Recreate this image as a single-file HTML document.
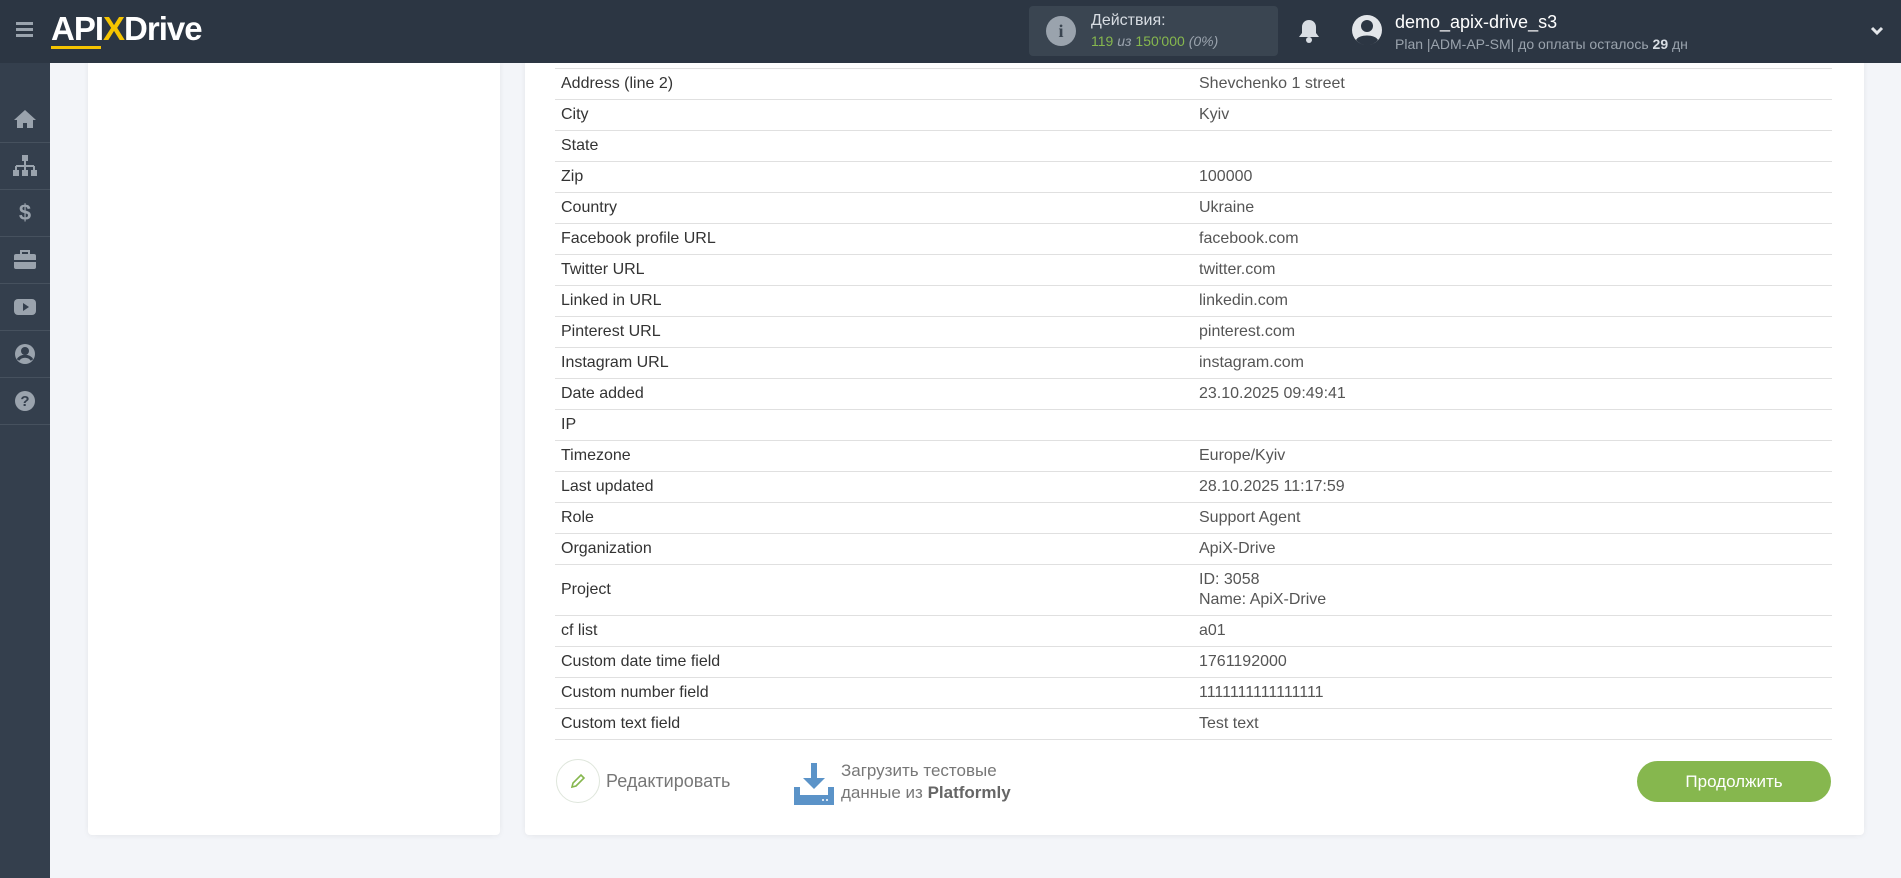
<!DOCTYPE html>
<html><head><meta charset="utf-8"><style>
*{box-sizing:border-box;margin:0;padding:0}
body{width:1901px;height:878px;overflow:hidden;background:#f3f5f9;font-family:"Liberation Sans","Noto Sans CJK SC",sans-serif;position:relative}
.hdr{position:absolute;left:0;top:0;width:1901px;height:63px;background:#2c3643;z-index:2}
.side{position:absolute;left:0;top:63px;width:50px;height:815px;background:#343f4d}
.side .it{position:absolute;left:0;width:50px;height:47px;border-bottom:1px solid #46515e;display:flex;align-items:center;justify-content:center}
.card{position:absolute;background:#fff;border-radius:4px;box-shadow:0 1px 6px rgba(0,0,0,.06)}
table{position:absolute;left:555px;top:68px;width:1277px;border-collapse:collapse;font-size:16px;color:#333}
td{border-top:1px solid #e0e0e0;height:31px;padding:0 6px;vertical-align:middle}
tr:last-child td{border-bottom:1px solid #e0e0e0}
td.v{padding-left:0;color:#555;width:633px}
</style></head><body>
<div class="hdr">
 <div style="position:absolute;left:16px;top:22px;width:17px;height:3px;background:#9aa3ad;box-shadow:0 6px 0 #9aa3ad,0 12px 0 #9aa3ad"></div>
 <div style="position:absolute;left:51px;top:10px;font-size:33px;font-weight:bold;color:#fff;letter-spacing:-1px">API<span style="color:#f5c400">X</span>Drive</div>
 <div style="position:absolute;left:51px;top:46px;width:50px;height:3px;background:#f5c400"></div>
 <div style="position:absolute;left:1029px;top:6px;width:249px;height:50px;background:#3a4551;border-radius:4px">
  <div style="position:absolute;left:17px;top:10px;width:30px;height:30px;border-radius:50%;background:#9aa3ad;color:#3a4551;font-weight:bold;font-size:18px;text-align:center;line-height:30px;font-family:'Liberation Serif',serif">i</div>
  <div style="position:absolute;left:62px;top:6px;color:#d8dde3;font-size:16px">Действия:</div>
  <div style="position:absolute;left:62px;top:27px;color:#86b74e;font-size:14px">119 <i style="color:#9aa3ad">из</i> 150'000 <i style="color:#9aa3ad">(0%)</i></div>
 </div>
 <svg style="position:absolute;left:1298px;top:18px" width="22" height="26" viewBox="0 0 22 26"><path d="M11 2c-4 0-7 3-7 7v6l-3 4h20l-3-4V9c0-4-3-7-7-7z" fill="#d8dde3"/><circle cx="11" cy="22" r="3" fill="#d8dde3"/></svg>
 <svg style="position:absolute;left:1351px;top:14px" width="32" height="32" viewBox="0 0 32 32"><circle cx="16" cy="16" r="15" fill="#e3e6ea"/><circle cx="16" cy="12" r="6" fill="#2c3643"/><path d="M5 26c3-6 19-6 22 0a14 14 0 0 1-22 0z" fill="#2c3643"/></svg>
 <div style="position:absolute;left:1395px;top:12px;color:#fff;font-size:18px">demo_apix-drive_s3</div>
 <div style="position:absolute;left:1395px;top:36px;color:#9aa3ad;font-size:14px">Plan |ADM-AP-SM| до оплаты осталось <b style="color:#d8dde3">29</b> дн</div>
 <svg style="position:absolute;left:1870px;top:26px" width="14" height="10" viewBox="0 0 14 10"><path d="M2 2l5 5 5-5" stroke="#e3e6ea" stroke-width="3" fill="none"/></svg>
</div>
<div class="side">
 <div class="it" style="top:33px"><svg width="24" height="20" viewBox="0 0 24 20"><path d="M12 1L1 11h3v8h6v-5h4v5h6v-8h3z" fill="#9aa3ad"/></svg></div>
 <div class="it" style="top:80px"><svg width="26" height="22" viewBox="0 0 26 22"><rect x="10" y="0" width="6" height="6" fill="#9aa3ad"/><path d="M13 6v5M4 11h18M4 11v4M13 11v4M22 11v4" stroke="#9aa3ad" stroke-width="2"/><rect x="1" y="15" width="6" height="6" fill="#9aa3ad"/><rect x="10" y="15" width="6" height="6" fill="#9aa3ad"/><rect x="19" y="15" width="6" height="6" fill="#9aa3ad"/></svg></div>
 <div class="it" style="top:127px;color:#9aa3ad;font-weight:bold;font-size:22px">$</div>
 <div class="it" style="top:174px"><svg width="24" height="20" viewBox="0 0 24 20"><path d="M8 4V1h8v3" stroke="#9aa3ad" stroke-width="2" fill="none"/><rect x="1" y="4" width="22" height="15" rx="2" fill="#9aa3ad"/><rect x="1" y="10" width="22" height="2" fill="#343f4d"/></svg></div>
 <div class="it" style="top:221px"><svg width="24" height="18" viewBox="0 0 24 18"><rect x="1" y="1" width="22" height="16" rx="4" fill="#9aa3ad"/><path d="M10 5v8l6-4z" fill="#343f4d"/></svg></div>
 <div class="it" style="top:268px"><svg width="22" height="22" viewBox="0 0 22 22"><circle cx="11" cy="11" r="10" fill="#9aa3ad"/><circle cx="11" cy="8" r="4" fill="#343f4d"/><path d="M4 17c3-5 11-5 14 0" stroke="#343f4d" stroke-width="3" fill="none"/></svg></div>
 <div class="it" style="top:315px"><svg width="22" height="22" viewBox="0 0 22 22"><circle cx="11" cy="11" r="10" fill="#9aa3ad"/><text x="11" y="16" text-anchor="middle" font-size="15" font-weight="bold" fill="#343f4d" font-family="Liberation Sans">?</text></svg></div>
</div>
<div class="card" style="left:88px;top:58px;width:412px;height:777px;border-radius:0 0 4px 4px"></div>
<div class="card" style="left:525px;top:58px;width:1339px;height:777px;border-radius:0 0 4px 4px"></div>
<table>
<tr><td>Address (line 2)</td><td class="v">Shevchenko 1 street</td></tr>
<tr><td>City</td><td class="v">Kyiv</td></tr>
<tr><td>State</td><td class="v"></td></tr>
<tr><td>Zip</td><td class="v">100000</td></tr>
<tr><td>Country</td><td class="v">Ukraine</td></tr>
<tr><td>Facebook profile URL</td><td class="v">facebook.com</td></tr>
<tr><td>Twitter URL</td><td class="v">twitter.com</td></tr>
<tr><td>Linked in URL</td><td class="v">linkedin.com</td></tr>
<tr><td>Pinterest URL</td><td class="v">pinterest.com</td></tr>
<tr><td>Instagram URL</td><td class="v">instagram.com</td></tr>
<tr><td>Date added</td><td class="v">23.10.2025 09:49:41</td></tr>
<tr><td>IP</td><td class="v"></td></tr>
<tr><td>Timezone</td><td class="v">Europe/Kyiv</td></tr>
<tr><td>Last updated</td><td class="v">28.10.2025 11:17:59</td></tr>
<tr><td>Role</td><td class="v">Support Agent</td></tr>
<tr><td>Organization</td><td class="v">ApiX-Drive</td></tr>
<tr><td style="height:51px">Project</td><td class="v" style="line-height:20px">ID: 3058<br>Name: ApiX-Drive</td></tr>
<tr><td>cf list</td><td class="v">a01</td></tr>
<tr><td>Custom date time field</td><td class="v">1761192000</td></tr>
<tr><td>Custom number field</td><td class="v">1111111111111111</td></tr>
<tr><td>Custom text field</td><td class="v">Test text</td></tr>
</table>
<div style="position:absolute;left:556px;top:759px;width:44px;height:44px;border-radius:50%;border:1px solid #dfe6dc;display:flex;align-items:center;justify-content:center"><svg width="18" height="18" viewBox="0 0 18 18"><path d="M3 15l1-4 8-8 3 3-8 8z" stroke="#86b74e" stroke-width="1.6" fill="none"/></svg></div>
<div style="position:absolute;left:606px;top:771px;font-size:18px;color:#777">Редактировать</div>
<svg style="position:absolute;left:794px;top:763px" width="40" height="42" viewBox="0 0 40 42"><rect x="17" y="0" width="6" height="16" fill="#5b93c8"/><path d="M9 15h22l-11 11z" fill="#5b93c8"/><path d="M0 24h6v8h28v-8h6v18H0z" fill="#5b93c8"/><circle cx="29" cy="37" r="1" fill="#fff"/><circle cx="33" cy="37" r="1" fill="#fff"/></svg>
<div style="position:absolute;left:841px;top:760px;font-size:17px;color:#777;line-height:22px">Загрузить тестовые<br>данные из <b style="color:#666">Platformly</b></div>
<div style="position:absolute;left:1637px;top:761px;width:194px;height:41px;border-radius:21px;background:#86b74e;color:#fff;font-size:17px;text-align:center;line-height:41px">Продолжить</div>
</body></html>
